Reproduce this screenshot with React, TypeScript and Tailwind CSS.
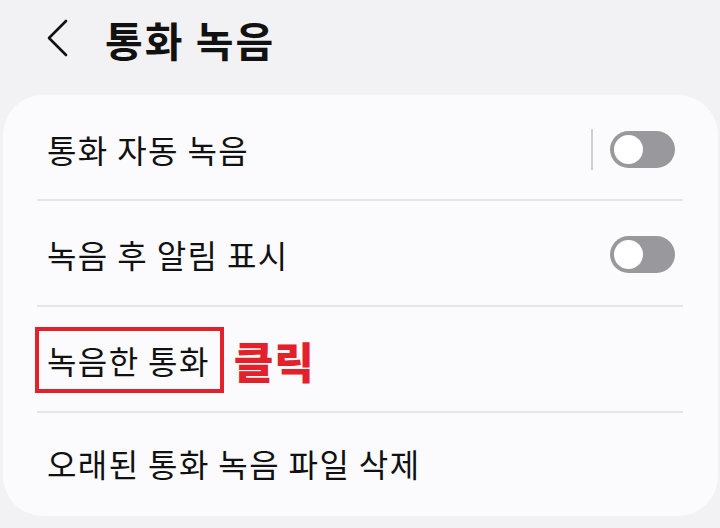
import React from "react";

const font = { fontFamily: '"Noto Sans CJK KR", "Noto Sans", sans-serif' };

function Toggle() {
  return (
    <div className="w-[65px] h-[37px] rounded-full bg-[#99999d] flex items-center pl-[4px]">
      <div className="w-[29px] h-[29px] rounded-full bg-white" />
    </div>
  );
}

function Divider() {
  return <div className="ml-[34px] mr-[35px] h-[2px] bg-[#e6e6e8]" />;
}

export default function App() {
  return (
    <div
      className="w-[720px] h-[528px] bg-[#f2f2f4] text-[#111111] overflow-hidden"
      style={font}
    >
      <div className="h-[95px] flex items-center pl-[47px] pb-[17px]">
        <svg width="22" height="38" viewBox="0 0 22 38" className="mt-[-2px]">
          <polyline
            points="19,2 2,19 19,36"
            fill="none"
            stroke="#111111"
            strokeWidth="2.6"
            strokeLinecap="round"
            strokeLinejoin="round"
          />
        </svg>
        <div className="ml-[36px] text-[41px] font-bold leading-none tracking-[2px]">
          통화 녹음
        </div>
      </div>
      <div className="ml-[3px] mr-[2px] h-[421px] rounded-[40px] bg-[#fbfbfd] flex flex-col">
        <div className="h-[104px] flex items-center pl-[44px] pr-[43px] pt-[4px]">
          <div className="flex-1 text-[32px] leading-none tracking-[1.4px]">통화 자동 녹음</div>
          <div className="w-[2px] h-[41px] bg-[#cfcfd2] mr-[17px]" />
          <Toggle />
        </div>
        <Divider />
        <div className="h-[104px] flex items-center pl-[44px] pr-[43px] pt-[2px]">
          <div className="flex-1 text-[32px] leading-none tracking-[1.4px]">녹음 후 알림 표시</div>
          <Toggle />
        </div>
        <Divider />
        <div className="h-[104px] flex items-center pl-[32px] pr-[43px] pt-[2px]">
          <div className="h-[66px] border-[4px] border-[#e3212b] flex items-center pl-[8px] pr-[10px]">
            <span className="text-[32px] leading-none tracking-[1.4px]">녹음한 통화</span>
          </div>
          <span className="ml-[10px] text-[43px] font-black leading-none text-[#e3212b] tracking-[1px]">
            클릭
          </span>
        </div>
        <Divider />
        <div className="flex-1 flex items-center pl-[44px] pr-[43px] pb-[4px]">
          <div className="text-[32px] leading-none tracking-[1.4px]">오래된 통화 녹음 파일 삭제</div>
        </div>
      </div>
    </div>
  );
}
